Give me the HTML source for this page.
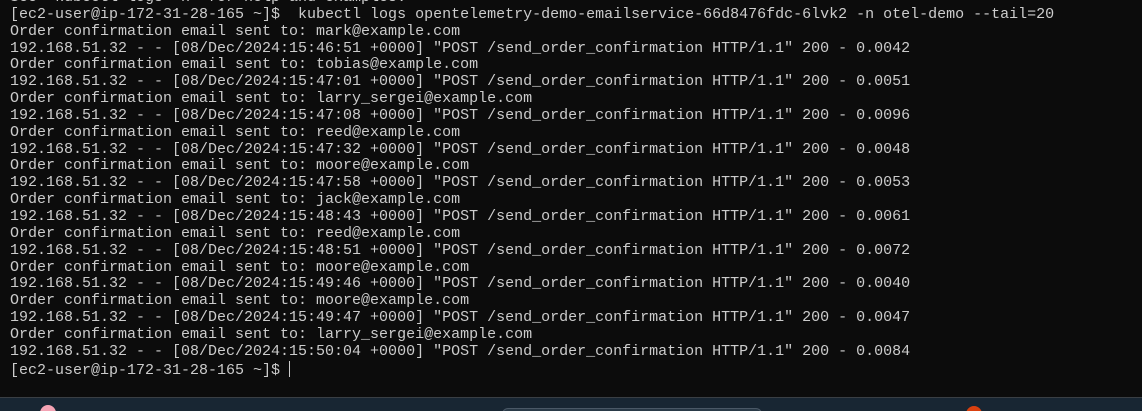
<!DOCTYPE html>
<html><head><meta charset="utf-8"><style>
html,body{margin:0;padding:0;width:1142px;height:411px;overflow:hidden;background:#0c0c0c;}
pre{position:absolute;left:10px;top:-10px;margin:0;font-family:"Liberation Mono",monospace;font-size:15px;line-height:16.85px;color:#cccccc;white-space:pre;}
.cur{display:inline-block;width:1px;height:16px;background:#ccc;vertical-align:-3px;}
.bar{position:absolute;left:0;top:397px;width:1142px;height:1px;background:#3a3f44;}
.task{position:absolute;left:0;top:398px;width:1142px;height:13px;background:#182633;overflow:hidden;}
.d1{position:absolute;left:40px;top:7px;width:16px;height:16px;border-radius:50%;background:#f4a3b4;}
.d2{position:absolute;left:966px;top:8px;width:16px;height:16px;border-radius:50%;background:#d9400f;}
.pill{position:absolute;left:502px;top:10px;width:258px;height:20px;border-radius:6px;background:#2a3a48;border:1px solid #4a5866;}
</style></head><body>
<pre>See 'kubectl logs -h' for help and examples.
[ec2-user@ip-172-31-28-165 ~]$  kubectl logs opentelemetry-demo-emailservice-66d8476fdc-6lvk2 -n otel-demo --tail=20
Order confirmation email sent to: mark@example.com
192.168.51.32 - - [08/Dec/2024:15:46:51 +0000] "POST /send_order_confirmation HTTP/1.1" 200 - 0.0042
Order confirmation email sent to: tobias@example.com
192.168.51.32 - - [08/Dec/2024:15:47:01 +0000] "POST /send_order_confirmation HTTP/1.1" 200 - 0.0051
Order confirmation email sent to: larry_sergei@example.com
192.168.51.32 - - [08/Dec/2024:15:47:08 +0000] "POST /send_order_confirmation HTTP/1.1" 200 - 0.0096
Order confirmation email sent to: reed@example.com
192.168.51.32 - - [08/Dec/2024:15:47:32 +0000] "POST /send_order_confirmation HTTP/1.1" 200 - 0.0048
Order confirmation email sent to: moore@example.com
192.168.51.32 - - [08/Dec/2024:15:47:58 +0000] "POST /send_order_confirmation HTTP/1.1" 200 - 0.0053
Order confirmation email sent to: jack@example.com
192.168.51.32 - - [08/Dec/2024:15:48:43 +0000] "POST /send_order_confirmation HTTP/1.1" 200 - 0.0061
Order confirmation email sent to: reed@example.com
192.168.51.32 - - [08/Dec/2024:15:48:51 +0000] "POST /send_order_confirmation HTTP/1.1" 200 - 0.0072
Order confirmation email sent to: moore@example.com
192.168.51.32 - - [08/Dec/2024:15:49:46 +0000] "POST /send_order_confirmation HTTP/1.1" 200 - 0.0040
Order confirmation email sent to: moore@example.com
192.168.51.32 - - [08/Dec/2024:15:49:47 +0000] "POST /send_order_confirmation HTTP/1.1" 200 - 0.0047
Order confirmation email sent to: larry_sergei@example.com
192.168.51.32 - - [08/Dec/2024:15:50:04 +0000] "POST /send_order_confirmation HTTP/1.1" 200 - 0.0084
[ec2-user@ip-172-31-28-165 ~]$ <span class="cur"></span></pre>
<div class="bar"></div>
<div class="task"><div class="d1"></div><div class="pill"></div><div class="d2"></div></div>
</body></html>
